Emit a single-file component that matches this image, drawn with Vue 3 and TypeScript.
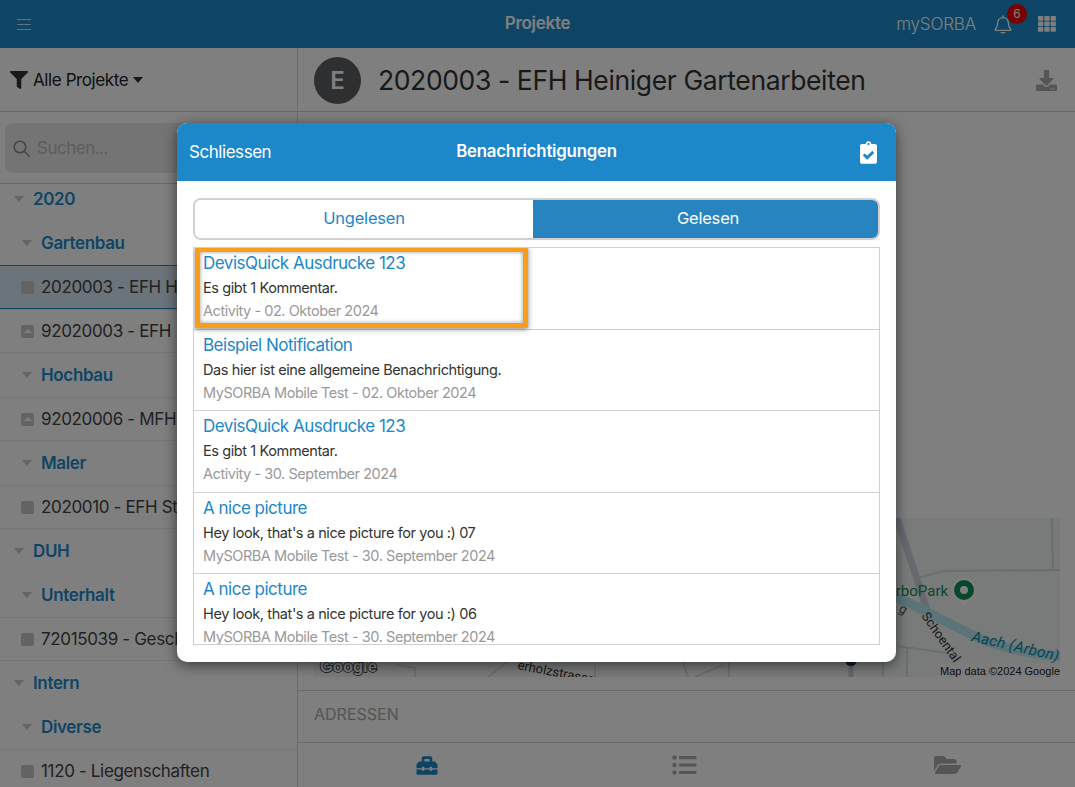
<template>
  <div class="page">
    <header class="topbar">
      <button class="menu-btn" aria-label="Menü"><span></span><span></span><span></span></button>
      <div class="topbar-title">Projekte</div>
      <div class="topbar-right">
        <span class="brand">mySORBA</span>
        <span class="bell">
          <svg width="18" height="19" viewBox="0 0 18 19" fill="none" stroke="#fff" stroke-width="1.3">
            <path d="M9 2.6c-3.2 0-5.3 2.3-5.3 5.2 0 3.900-1.100 5.300-2.500 6.700-.3.4-.1.900.4.900h14.800c.5 0 .7-.5.400-.9-1.400-1.400-2.500-2.800-2.500-6.700 0-2.900-2.100-5.200-5.300-5.200z" />
            <path d="M9 .8v1.800M7 17.600h4" stroke-linecap="round" />
          </svg>
          <span class="badge">6</span>
        </span>
        <svg class="grid-icon" width="18" height="16" viewBox="0 0 18 16" fill="#fff">
          <template v-for="r in 3" :key="r">
            <rect v-for="c in 3" :key="c" :x="(c - 1) * 6.300" :y="(r - 1) * 5.500" width="5.300" height="4.700" rx=".8" />
          </template>
        </svg>
      </div>
    </header>

    <div class="body">
      <aside class="sidebar">
        <div class="filter">
          <svg width="18" height="18" viewBox="0 0 512 512" fill="#333">
            <path d="M487.976 0H24.028C2.71 0-8.047 25.866 7.058 40.971L192 225.941V432c0 7.831 3.821 15.17 10.237 19.662l80 55.98C298.02 518.69 320 507.493 320 487.98V225.941l184.947-184.97C520.021 25.896 509.338 0 487.976 0z" />
          </svg>
          <span>Alle Projekte</span>
          <i class="caret dark"></i>
        </div>
        <div class="search">
          <div class="search-box">
            <svg width="17" height="17" viewBox="0 0 17 17" fill="none" stroke="#888" stroke-width="1.500">
              <circle cx="7" cy="7" r="5.800" />
              <path d="M11.200 11.200l5 5" stroke-linecap="round" />
            </svg>
            <span>Suchen...</span>
          </div>
        </div>
        <div class="tree">
          <div class="tree-inner">
            <div
              v-for="row in tree"
              :key="row.label"
              class="row"
              :class="[row.kind, { active: row.active }]"
            >
              <i v-if="row.kind !== 'project'" class="caret"></i>
              <i v-else class="state" :class="{ up: row.up }"></i>
              <span class="row-label">{{ row.label }}</span>
            </div>
          </div>
        </div>
      </aside>

      <main class="main">
        <div class="title-bar">
          <div class="avatar">E</div>
          <h1>2020003 - EFH Heiniger Gartenarbeiten</h1>
          <svg class="dl" width="21" height="21" viewBox="0 0 512 512" fill="#aaa">
            <path d="M216 0h80c13.300 0 24 10.700 24 24v168h87.700c17.800 0 26.700 21.500 14.100 34.100L269.700 378.300c-7.500 7.500-19.800 7.500-27.300 0L90.100 226.100c-12.600-12.600-3.700-34.100 14.100-34.100H192V24c0-13.300 10.700-24 24-24zm296 376v112c0 13.300-10.700 24-24 24H24c-13.300 0-24-10.700-24-24V376c0-13.300 10.700-24 24-24h146.700l49 49c20.100 20.100 52.500 20.100 72.600 0l49-49H488c13.300 0 24 10.700 24 24zm-124 88c0-11-9-20-20-20s-20 9-20 20 9 20 20 20 20-9 20-20zm64 0c0-11-9-20-20-20s-20 9-20 20 9 20 20 20 20-9 20-20z" />
          </svg>
        </div>

        <div class="content">
          <div class="map">
            <svg width="746" height="159" viewBox="314 518 746 159" fill="none">
              <g stroke="#d5dde6" stroke-width="2">
                <path d="M1052 518l1 52" />
                <path d="M918 578l25-7 117-1" />
                <path d="M916 603l60 30" />
                <path d="M897 646l50 7" />
                <path d="M907 648v29M883 650v27" />
                <path d="M397 665l18 3v9M488 677l19-15M595 665v12" />
                <path d="M683 662l5 15M695 677l28-12M729 662v15" />
              </g>
              <path d="M897 518l30 92" stroke="#cdd5de" stroke-width="7" />
              <path d="M851 662v15" stroke="#c6d0da" stroke-width="5" />
              <path d="M896 597c30 13 60 32 92 45 24 8 48 13 72 14" stroke="#b4e8f4" stroke-width="9" />
              <text x="886" y="596" class="m-park">ArboPark</text>
              <path d="M964 578a12 12 0 0 1 8 21l-8 7-8-7a12 12 0 0 1 8-21z" fill="#fff" />
              <circle cx="964" cy="590" r="10" fill="#0f8f54" />
              <circle cx="964" cy="590" r="4" fill="#fff" />
              <text transform="translate(921 616) rotate(55)" class="m-road">Schoental</text>
              <text transform="translate(971 641) rotate(13)" class="m-water">Aach (Arbon)</text>
              <text transform="translate(898 611) rotate(30)" class="m-small">g</text>
              <text transform="translate(517 669) rotate(11)" class="m-road">erholzstrasse</text>
              <rect x="938" y="663" width="122" height="14" fill="#fff" opacity=".45" />
              <text x="940" y="675" class="m-credit">Map data ©2024 Google</text>
              <text x="320" y="672" class="m-google">Google</text>
              <circle cx="851" cy="660" r="6" fill="#234" />
            </svg>
          </div>
        </div>

        <div class="section">ADRESSEN</div>

        <nav class="tabbar">
          <svg width="24" height="21" viewBox="0 0 512 512" fill="#1c87c9">
            <path d="M502.630 214.630l-45.250-45.250c-6-6-14.140-9.370-22.630-9.370H384V80c0-26.510-21.490-48-48-48H176c-26.510 0-48 21.490-48 48v80H77.250c-8.490 0-16.620 3.370-22.630 9.370L9.370 214.630c-6 6-9.370 14.140-9.370 22.630V320h128v-16c0-8.840 7.160-16 16-16h32c8.840 0 16 7.160 16 16v16h128v-16c0-8.840 7.160-16 16-16h32c8.840 0 16 7.160 16 16v16h128v-82.750c0-8.480-3.370-16.620-9.370-22.620zM320 160H192V96h128v64zm64 208c0 8.840-7.160 16-16 16h-32c-8.840 0-16-7.160-16-16v-16H192v16c0 8.840-7.160 16-16 16h-32c-8.840 0-16-7.160-16-16v-16H0v96c0 17.670 14.330 32 32 32h448c17.670 0 32-14.330 32-32v-96H384v16z" />
          </svg>
          <svg width="25" height="20" viewBox="0 0 25 20" fill="#aaa">
            <circle cx="2.500" cy="2.500" r="2.200" /><rect x="7" y="1" width="17.500" height="3.200" rx=".8" />
            <circle cx="2.500" cy="10" r="2.200" /><rect x="7" y="8.400" width="17.500" height="3.200" rx=".8" />
            <circle cx="2.500" cy="17.500" r="2.200" /><rect x="7" y="15.900" width="17.500" height="3.200" rx=".8" />
          </svg>
          <svg class="folder" width="27" height="24" viewBox="0 0 576 512" fill="#aaa">
            <path d="M572.694 292.093L500.270 416.248A63.997 63.997 0 0 1 444.989 448H45.025c-18.523 0-30.064-20.093-20.731-36.093l72.424-124.155A64 64 0 0 1 152 256h399.964c18.523 0 30.064 20.093 20.730 36.093zM152 224h328v-48c0-26.510-21.490-48-48-48H272l-64-64H48C21.490 64 0 85.490 0 112v278.046l69.077-118.418C86.214 242.250 117.989 224 152 224z" />
          </svg>
        </nav>
      </main>
    </div>

    <div class="backdrop">
      <section class="modal">
        <div class="modal-head">
          <span class="close">Schliessen</span>
          <span class="modal-title">Benachrichtigungen</span>
          <svg width="17" height="23" viewBox="0 0 384 512" fill="#fff">
            <path d="M336 64h-80c0-35.300-28.700-64-64-64s-64 28.700-64 64H48C21.500 64 0 85.500 0 112v352c0 26.500 21.500 48 48 48h288c26.500 0 48-21.500 48-48V112c0-26.500-21.500-48-48-48zM192 40c13.300 0 24 10.700 24 24s-10.700 24-24 24-24-10.700-24-24 10.700-24 24-24zm121.200 231.800l-143 141.800c-4.700 4.700-12.300 4.600-17-.1l-82.600-83.300c-4.700-4.700-4.600-12.300.1-17L99.100 285c4.700-4.700 12.300-4.600 17 .1l46 46.400 106-105.200c4.700-4.700 12.300-4.600 17 .1l28.200 28.400c4.700 4.800 4.600 12.300-.1 17z" />
          </svg>
        </div>
        <div class="modal-body">
          <div class="tabs">
            <div class="tab on">Ungelesen</div>
            <div class="tab">Gelesen</div>
          </div>
          <div class="list">
            <div v-for="(n, i) in notifications" :key="i" class="item">
              <div class="item-title">{{ n.title }}</div>
              <div class="item-text">{{ n.text }}</div>
              <div class="item-meta">{{ n.meta }}</div>
            </div>
            <div class="marker"></div>
          </div>
        </div>
      </section>
    </div>
  </div>
</template>

<script setup lang="ts">
interface TreeRow {
  label: string
  kind: 'root' | 'group' | 'project'
  active?: boolean
  up?: boolean
}

interface Notification {
  title: string
  text: string
  meta: string
}

const tree: TreeRow[] = [
  { label: '2020', kind: 'root' },
  { label: 'Gartenbau', kind: 'group' },
  { label: '2020003 - EFH H', kind: 'project', active: true },
  { label: '92020003 - EFH', kind: 'project', up: true },
  { label: 'Hochbau', kind: 'group' },
  { label: '92020006 - MFH', kind: 'project', up: true },
  { label: 'Maler', kind: 'group' },
  { label: '2020010 - EFH St', kind: 'project' },
  { label: 'DUH', kind: 'root' },
  { label: 'Unterhalt', kind: 'group' },
  { label: '72015039 - Gesch', kind: 'project' },
  { label: 'Intern', kind: 'root' },
  { label: 'Diverse', kind: 'group' },
  { label: '1120 - Liegenschaften', kind: 'project' },
]

const notifications: Notification[] = [
  { title: 'DevisQuick Ausdrucke 123', text: 'Es gibt 1 Kommentar.', meta: 'Activity - 02. Oktober 2024' },
  { title: 'Beispiel Notification', text: 'Das hier ist eine allgemeine Benachrichtigung.', meta: 'MySORBA Mobile Test - 02. Oktober 2024' },
  { title: 'DevisQuick Ausdrucke 123', text: 'Es gibt 1 Kommentar.', meta: 'Activity - 30. September 2024' },
  { title: 'A nice picture', text: "Hey look, that's a nice picture for you :) 07", meta: 'MySORBA Mobile Test - 30. September 2024' },
  { title: 'A nice picture', text: "Hey look, that's a nice picture for you :) 06", meta: 'MySORBA Mobile Test - 30. September 2024' },
]
</script>

<style>
html,
body {
  margin: 0;
  background: #fff;
}
</style>

<style scoped>
.page {
  position: relative;
  width: 1075px;
  height: 787px;
  overflow: hidden;
  display: flex;
  flex-direction: column;
  font-family: Inter, 'Noto Sans', sans-serif;
  color: #444;
  background: #fff;
}

.topbar {
  height: 48px;
  flex: none;
  display: flex;
  align-items: center;
  background: #1c8bcc;
  position: relative;
  color: #fff;
}
.menu-btn {
  margin-left: 17px;
  width: 14px;
  padding: 0;
  border: 0;
  background: none;
  display: flex;
  flex-direction: column;
  gap: 4px;
}
.menu-btn span {
  height: 1px;
  background: #fff;
  opacity: 0.75;
}
.topbar-title {
  position: absolute;
  left: 0;
  right: 0;
  top: 13px;
  text-align: center;
  font-size: 17px;
  font-weight: 600;
  letter-spacing: -0.3px;
}
.topbar-right {
  margin-left: auto;
  display: flex;
  align-items: center;
  padding-right: 19px;
}
.brand {
  font-size: 17px;
  font-weight: 300;
  letter-spacing: -0.15px;
  margin-right: 18px;
}
.bell {
  position: relative;
  display: flex;
  margin-right: 26px;
}
.badge {
  position: absolute;
  left: 13px;
  top: -11px;
  width: 20px;
  height: 20px;
  border-radius: 50%;
  background: #f00000;
  font-size: 12px;
  line-height: 20px;
  text-align: center;
}

.body {
  flex: 1;
  display: flex;
  min-height: 0;
}
.sidebar {
  width: 297px;
  flex: none;
  display: flex;
  flex-direction: column;
  border-right: 1px solid #d6d6d6;
}
.filter {
  height: 64px;
  flex: none;
  box-sizing: border-box;
  display: flex;
  align-items: center;
  padding-left: 10px;
  font-size: 17px;
  color: #222;
  border-bottom: 1px solid #d2d2d2;
  letter-spacing: -0.4px;
}
.filter span {
  margin-left: 5px;
}
.search {
  height: 72px;
  flex: none;
  padding: 11px 0 0 5px;
  box-sizing: border-box;
  border-bottom: 1px solid #d2d2d2;
}
.search-box {
  height: 50px;
  border-radius: 8px;
  background: #e8e8e8;
  display: flex;
  align-items: center;
  padding-left: 8px;
  gap: 7px;
  font-size: 17px;
  letter-spacing: -0.5px;
  color: #bbb;
}
.tree {
  flex: 1;
  overflow: hidden;
}
.tree-inner {
  margin-top: -7px;
}
.row {
  height: 44px;
  box-sizing: border-box;
  display: flex;
  align-items: center;
  white-space: nowrap;
  font-size: 17px;
}
.row.root {
  padding-left: 14px;
}
.row.group {
  padding-left: 22px;
}
.row.root,
.row.group {
  color: #1c8bcc;
  font-weight: 600;
  letter-spacing: -0.35px;
}
.row.root .caret {
  margin-right: 9px;
}
.row.group .caret {
  margin-right: 9px;
}
.row.project {
  padding-left: 21px;
  color: #444;
  letter-spacing: -0.35px;
  border-top: 1px solid #ececec;
  border-bottom: 1px solid #ececec;
}
.row.project.active {
  background: #d7e8f4;
  border-color: #1c8bcc;
  border-width: 1.500px;
}
.caret {
  display: inline-block;
  flex: none;
  width: 0;
  height: 0;
  border-left: 5px solid transparent;
  border-right: 5px solid transparent;
  border-top: 6px solid #c8c8c8;
}
.caret.dark {
  border-top-color: #333;
  margin-left: 5px;
}
.state {
  position: relative;
  flex: none;
  width: 13px;
  height: 13px;
  border-radius: 2px;
  background: #c6c6c6;
  margin-right: 7px;
}
.state.up::after {
  content: '';
  position: absolute;
  left: 2.500px;
  top: 4px;
  border-left: 4px solid transparent;
  border-right: 4px solid transparent;
  border-bottom: 4px solid #fff;
}

.main {
  flex: 1;
  display: flex;
  flex-direction: column;
  min-width: 0;
}
.title-bar {
  height: 64px;
  flex: none;
  box-sizing: border-box;
  display: flex;
  align-items: center;
  padding: 1px 18px 0 16px;
  border-bottom: 1px solid #d2d2d2;
}
.avatar {
  width: 47px;
  height: 47px;
  border-radius: 50%;
  background: #5c5e61;
  color: #fff;
  font-size: 24px;
  font-weight: 600;
  line-height: 47px;
  text-align: center;
}
h1 {
  margin: 0 0 0 17px;
  font-size: 26.500px;
  font-weight: 400;
  letter-spacing: -0.38px;
  color: #333;
  flex: 1;
}
.content {
  flex: 1;
  display: flex;
  align-items: flex-end;
  padding: 0 0 13px 16px;
  border-bottom: 1px solid #d2d2d2;
}
.map {
  height: 159px;
  width: 746px;
  background: #f3f4f4;
  overflow: hidden;
}
.map svg {
  display: block;
}
.m-park {
  font: 15px Roboto, sans-serif;
  fill: #0f8f54;
}
.m-road {
  font: 13px Roboto, sans-serif;
  fill: #333;
}
.m-small {
  font: 13px Roboto, sans-serif;
  fill: #555;
}
.m-water {
  font: italic 15px Roboto, sans-serif;
  fill: #0a8aa5;
  letter-spacing: 0.3px;
}
.m-credit {
  font: 11px 'Liberation Sans', sans-serif;
  fill: #222;
}
.m-google {
  font: bold 16.500px 'Liberation Sans', sans-serif;
  fill: #fff;
  stroke: #222;
  stroke-width: 1.500px;
  paint-order: stroke;
}
.section {
  height: 52px;
  flex: none;
  box-sizing: border-box;
  display: flex;
  align-items: center;
  padding: 0 0 6px 16px;
  font-size: 16px;
  color: #aaa;
  border-bottom: 1px solid #d2d2d2;
}
.tabbar {
  height: 44px;
  flex: none;
  display: grid;
  grid-template-columns: repeat(3, 1fr);
  align-items: center;
  justify-items: center;
  padding-right: 4px;
}
.folder {
  margin-left: 10px;
}

.backdrop {
  position: absolute;
  inset: 0;
  background: rgba(0, 0, 0, 0.5);
  display: flex;
  align-items: center;
  justify-content: center;
  padding: 0 2px 2px 0;
  box-sizing: border-box;
}
.modal {
  width: 719px;
  height: 539px;
  border-radius: 10px;
  background: #fff;
  overflow: hidden;
  box-shadow: 0 3px 14px rgba(0, 0, 0, 0.55);
  display: flex;
  flex-direction: column;
}
.modal-head {
  height: 58px;
  flex: none;
  display: flex;
  align-items: center;
  justify-content: space-between;
  padding: 0 19px 0 12px;
  background: #1c87c9;
  color: #fff;
  position: relative;
}
.close {
  font-size: 17px;
  letter-spacing: -0.45px;
}
.modal-title {
  position: absolute;
  left: 0;
  right: 0;
  text-align: center;
  font-size: 16.800px;
  font-weight: 600;
  letter-spacing: -0.2px;
  top: 18px;
}
.modal-body {
  flex: 1;
  min-height: 0;
  padding: 17px 16px 17px 16px;
  display: flex;
  flex-direction: column;
}
.tabs {
  height: 42px;
  flex: none;
  box-sizing: border-box;
  border: 2px solid #d0d0d0;
  border-radius: 8px;
  display: flex;
  overflow: hidden;
  margin-bottom: 7px;
}
.tab {
  flex: 1;
  display: flex;
  align-items: center;
  justify-content: center;
  padding: 0 0 2px 5px;
  font-size: 16.500px;
  letter-spacing: -0.2px;
  background: #2784bf;
  color: #fff;
}
.tab.on {
  flex: none;
  width: 338px;
  box-sizing: border-box;
  padding-left: 0;
  background: #fff;
  color: #1c87c9;
}
.list {
  flex: 1;
  min-height: 0;
  position: relative;
  overflow: hidden;
  border: 1px solid #d0d0d0;
}
.item {
  height: 81.500px;
  box-sizing: border-box;
  padding: 3px 9px 0;
  border-bottom: 1px solid #d0d0d0;
  white-space: nowrap;
}
.item-title {
  font-size: 17px;
  line-height: 24px;
  color: #1c87c9;
  letter-spacing: -0.5px;
}
.item-text {
  margin-top: 3px;
  font-size: 14.500px;
  line-height: 20px;
  color: #333;
  letter-spacing: -0.4px;
}
.item-meta {
  margin-top: 3px;
  font-size: 14.500px;
  line-height: 20px;
  color: #999;
  letter-spacing: -0.45px;
}
.marker {
  position: absolute;
  left: 1px;
  top: -1px;
  width: 333px;
  height: 81px;
  box-sizing: border-box;
  border: 5px solid #fb9d1c;
  box-shadow: 0 1px 5px rgba(0, 0, 0, 0.5), inset 0 0 4px rgba(0, 0, 0, 0.4);
}
</style>
